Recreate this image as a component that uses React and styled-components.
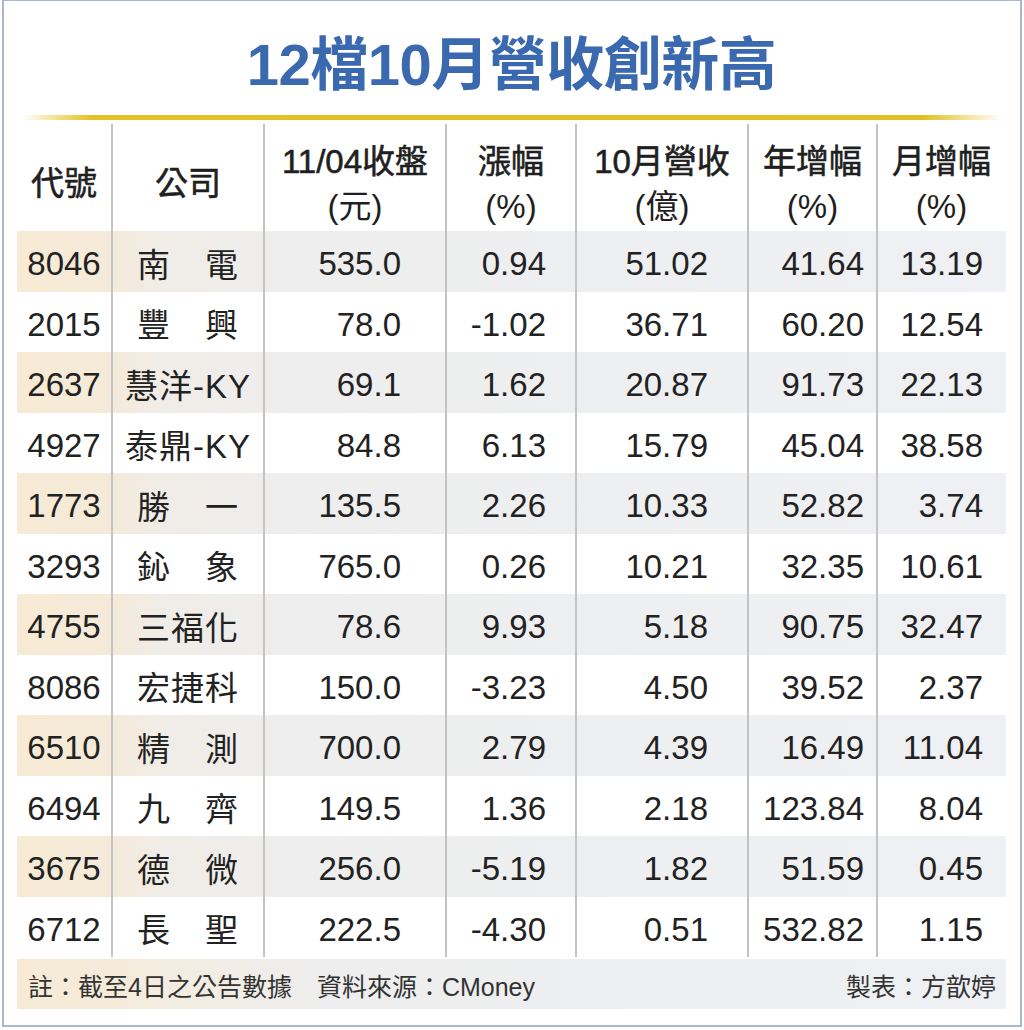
import React from "react";
import styled, { createGlobalStyle } from "styled-components";

const GlobalStyle = createGlobalStyle`
  html, body {
    margin: 0;
    padding: 0;
    background: #ffffff;
  }
  body {
    font-family: "Liberation Sans", "Noto Sans CJK TC", sans-serif;
    color: #222222;
  }
`;

const columns = "96px 152px 182px 130px 172px 129px 127px";

const rows = [
  ["8046", "南　電", "535.0", "0.94", "51.02", "41.64", "13.19"],
  ["2015", "豐　興", "78.0", "-1.02", "36.71", "60.20", "12.54"],
  ["2637", "慧洋-KY", "69.1", "1.62", "20.87", "91.73", "22.13"],
  ["4927", "泰鼎-KY", "84.8", "6.13", "15.79", "45.04", "38.58"],
  ["1773", "勝　一", "135.5", "2.26", "10.33", "52.82", "3.74"],
  ["3293", "鈊　象", "765.0", "0.26", "10.21", "32.35", "10.61"],
  ["4755", "三福化", "78.6", "9.93", "5.18", "90.75", "32.47"],
  ["8086", "宏捷科", "150.0", "-3.23", "4.50", "39.52", "2.37"],
  ["6510", "精　測", "700.0", "2.79", "4.39", "16.49", "11.04"],
  ["6494", "九　齊", "149.5", "1.36", "2.18", "123.84", "8.04"],
  ["3675", "德　微", "256.0", "-5.19", "1.82", "51.59", "0.45"],
  ["6712", "長　聖", "222.5", "-4.30", "0.51", "532.82", "1.15"],
];

const headers = [
  ["代號"],
  ["公司"],
  ["11/04收盤", "(元)"],
  ["漲幅", "(%)"],
  ["10月營收", "(億)"],
  ["年增幅", "(%)"],
  ["月增幅", "(%)"],
];

// right padding of each numeric column, 0 = centered
const padRight = [0, 0, 44, 29, 39, 12, 22];

const App = () => {
  return (
    <>
      <GlobalStyle />
      <Frame>
        <Title>12檔10月營收創新高</Title>
        <GoldLine />
        <Table>
          <HeaderRow>
            {headers.map((h, i) => (
              <HeadCell key={i} $last={i === headers.length - 1}>
                <HeadMain>{h[0]}</HeadMain>
                {h[1] && <HeadUnit>{h[1]}</HeadUnit>}
              </HeadCell>
            ))}
          </HeaderRow>
          {rows.map((r, ri) => (
            <Row key={r[0]} $shaded={ri % 2 === 0}>
              {r.map((v, ci) => (
                <Cell key={ci} $pad={padRight[ci]} $last={ci === r.length - 1} $name={ci === 1}>
                  {v}
                </Cell>
              ))}
            </Row>
          ))}
        </Table>
        <Footer>
          <span>註：截至4日之公告數據　資料來源：CMoney</span>
          <span>製表：方歆婷</span>
        </Footer>
      </Frame>
    </>
  );
};

const Frame = styled.div`
  box-sizing: border-box;
  width: 1020px;
  height: 1027px;
  margin-left: 2px;
  border: 2px solid #a9b7d2;
  border-top-width: 1px;
  background: #ffffff;
  padding: 0 14px 0 13px;
  display: flex;
  flex-direction: column;
`;

const Title = styled.h1`
  margin: 0;
  height: 114px;
  display: flex;
  align-items: center;
  justify-content: center;
  padding-top: 4px;
  box-sizing: border-box;
  font-family: "Liberation Sans", "Noto Sans CJK TC", sans-serif;
  font-size: 58px;
  font-weight: 700;
  color: #3a69b0;
  letter-spacing: -0.5px;
`;

const GoldLine = styled.div`
  height: 5px;
  margin: 0 4px 0 5px;
  background: linear-gradient(
    to right,
    rgba(232, 194, 36, 0) 0,
    #e6c126 7%,
    #e4bf22 92%,
    rgba(232, 194, 36, 0) 100%
  );
`;

const Table = styled.div`
  display: flex;
  flex-direction: column;
  margin-top: 2px;
`;

const HeaderRow = styled.div`
  display: grid;
  grid-template-columns: ${columns};
  height: 109px;
`;

const HeadCell = styled.div`
  display: flex;
  flex-direction: column;
  align-items: center;
  justify-content: center;
  padding-top: 12px;
  margin-top: 2px;
  box-sizing: border-box;
  border-right: ${(p) => (p.$last ? "none" : "2px solid #c3c3c3")};
  font-size: 33px;
  line-height: 45px;
  color: #1f1f1f;
`;

const HeadMain = styled.div`
  font-weight: 400;
  -webkit-text-stroke: 0.6px #1f1f1f;
`;

const HeadUnit = styled.div`
  font-weight: 400;
`;

const Row = styled.div`
  display: grid;
  grid-template-columns: ${columns};
  height: 60.5px;
  background: ${(p) =>
    p.$shaded
      ? "linear-gradient(to right, #f7ebd5 0, #f5ead9 94px, #f0ece6 140px, #eeeeee 270px, #eef0f3 100%)"
      : "#ffffff"};
`;

const Cell = styled.div`
  display: flex;
  align-items: center;
  justify-content: ${(p) => (p.$pad ? "flex-end" : "center")};
  padding-right: ${(p) => p.$pad}px;
  padding-top: ${(p) => (p.$name ? "3px" : "6px")};
  box-sizing: border-box;
  border-right: ${(p) => (p.$last ? "none" : "2px solid #c3c3c3")};
  font-size: 33px;
  color: #222222;
  white-space: nowrap;
  ${(p) => (p.$name ? "letter-spacing: 1px;" : "")}
`;

const Footer = styled.div`
  display: flex;
  justify-content: space-between;
  align-items: center;
  height: 48px;
  margin-top: 2px;
  padding: 2px 10px 0 11px;
  background: linear-gradient(to right, #f7ebd5 0, #f4ebdc 110px, #eeeeee 300px, #eef0f3 100%);
  font-size: 25px;
  color: #333333;
`;

export default App;
